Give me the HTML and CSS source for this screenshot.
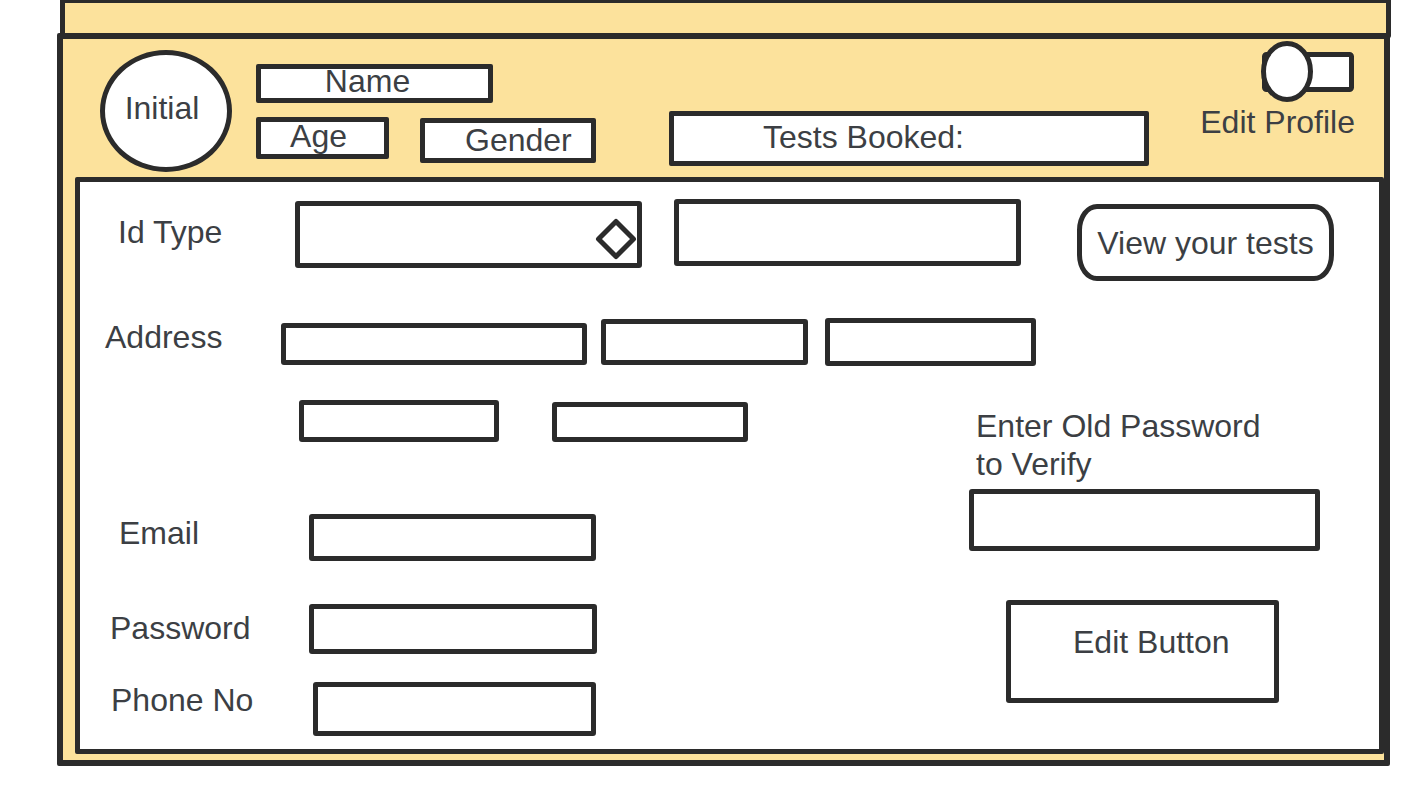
FILE: index.html
```html
<!DOCTYPE html>
<html lang="en">
  <head>
    <meta charset="UTF-8" />
    <meta name="viewport" content="width=device-width, initial-scale=1.0" />
    <title>Profile</title>
    <link rel="stylesheet" href="styles.css">
  </head>
  <body>
    <div class="topbar"></div>
    <div class="frame">
      <div class="header">
        <div class="avatar">Initial</div>
        <div class="ident">
          <div class="tag tag-name">Name</div>
          <div class="ident-row">
            <div class="tag tag-age">Age</div>
            <div class="tag tag-gender">Gender</div>
          </div>
        </div>
        <div class="tag tag-tests">Tests Booked:</div>
        <div class="profile">
          <svg class="toggle" width="98" height="66" viewBox="0 0 98 66">
            <rect x="5.5" y="15.5" width="87" height="35" rx="2" fill="#fff" stroke="#2b2b2b" stroke-width="5" />
            <ellipse cx="28" cy="32.5" rx="23.5" ry="28" fill="#fff" stroke="#2b2b2b" stroke-width="5" />
          </svg>
          <span class="profile-label">Edit Profile</span>
        </div>
      </div>

      <div class="sheet">
        <div class="row row-id">
          <span class="lbl lbl-id">Id Type</span>
          <div class="field select">
            <svg class="caret" width="42" height="42" viewBox="0 0 42 42">
              <polygon points="21,3.5 38.5,21 21,38.5 3.5,21" fill="#fff" stroke="#2b2b2b" stroke-width="5" stroke-linejoin="round" />
            </svg>
          </div>
          <div class="field id-number"></div>
          <div class="btn-tests">View your tests</div>
        </div>

        <div class="row row-address">
          <span class="lbl lbl-address">Address</span>
          <div class="field addr-1"></div>
          <div class="field addr-2"></div>
          <div class="field addr-3"></div>
        </div>

        <div class="lower">
          <div class="lower-left">
            <div class="row row-address2">
              <div class="field addr-4"></div>
              <div class="field addr-5"></div>
            </div>
            <div class="row row-email">
              <span class="lbl lbl-email">Email</span>
              <div class="field email"></div>
            </div>
            <div class="row row-password">
              <span class="lbl lbl-password">Password</span>
              <div class="field password"></div>
            </div>
            <div class="row row-phone">
              <span class="lbl lbl-phone">Phone No</span>
              <div class="field phone"></div>
            </div>
          </div>
          <div class="lower-right">
            <p class="verify-label">Enter Old Password<br />to Verify</p>
            <div class="field old-password"></div>
            <div class="btn-edit">Edit Button</div>
          </div>
        </div>
      </div>
    </div>
  </body>
</html>
```

FILE: styles.css
```css
body {
  margin: 0;
  background-color: #fff;
  font-family: "Liberation Sans", Arial, sans-serif;
  color: #3c3f44;
  font-size: 32px;
  line-height: 36px;
}
.topbar {
  box-sizing: border-box;
  margin: -2px 0 0 60px;
  width: 1331px;
  height: 40px;
  border: 5px solid #2b2b2b;
  border-radius: 2px;
  background-color: #fce29c;
}
.frame {
  box-sizing: border-box;
  margin: -5px 0 0 57px;
  width: 1333px;
  height: 733px;
  border: 6px solid #2b2b2b;
  border-radius: 2px;
  padding-bottom: 6px;
  background-color: #fce29c;
}
.header {
  display: flex;
  align-items: flex-start;
  height: 138px;
}
.avatar {
  box-sizing: border-box;
  display: flex;
  align-items: center;
  justify-content: center;
  flex-shrink: 0;
  margin: 11px 0 0 37px;
  width: 132px;
  height: 122px;
  padding: 0 8px 6px 0;
  border: 5px solid #2b2b2b;
  border-radius: 50%;
  background-color: #fff;
}
.ident {
  margin-left: 24px;
}
.ident-row {
  display: flex;
  align-items: flex-start;
}
.tag {
  box-sizing: border-box;
  flex-shrink: 0;
  border: 5px solid #2b2b2b;
  border-radius: 2px;
  background-color: #fff;
  white-space: nowrap;
}
.tag-name {
  margin-top: 25px;
  width: 237px;
  height: 39px;
  line-height: 24px;
  text-align: center;
  padding-right: 14px;
}
.tag-age {
  margin-top: 14px;
  width: 133px;
  height: 42px;
  line-height: 29px;
  text-align: center;
  padding-right: 8px;
}
.tag-gender {
  margin: 15px 0 0 31px;
  width: 176px;
  height: 45px;
  line-height: 35px;
  padding-left: 40px;
}
.tag-tests {
  margin: 72px 0 0 73px;
  width: 480px;
  height: 55px;
  line-height: 43px;
  padding-left: 89px;
}
.profile {
  display: flex;
  flex-direction: column;
  align-items: flex-end;
  margin: 0 29px 0 auto;
}
.toggle {
  display: block;
  margin-right: -2px;
}
.profile-label {
  margin-top: -1px;
  white-space: nowrap;
}
.sheet {
  box-sizing: border-box;
  margin-left: 12px;
  width: 1309px;
  height: 577px;
  border: 5px solid #2b2b2b;
  border-radius: 2px;
  background-color: #fff;
}
.row {
  display: flex;
  align-items: flex-start;
}
.lbl {
  flex-shrink: 0;
  white-space: nowrap;
}
.field {
  box-sizing: border-box;
  flex-shrink: 0;
  border: 5px solid #2b2b2b;
  border-radius: 3px;
  background-color: #fff;
}
.lbl-id {
  margin: 32px 0 0 38px;
  width: 177px;
}
.select {
  display: flex;
  justify-content: flex-end;
  align-items: center;
  margin-top: 19px;
  width: 347px;
  height: 67px;
}
.caret {
  display: block;
  margin-top: 9px;
}
.id-number {
  margin: 17px 0 0 32px;
  width: 347px;
  height: 67px;
}
.btn-tests {
  box-sizing: border-box;
  display: flex;
  align-items: center;
  justify-content: center;
  flex-shrink: 0;
  margin: 22px 0 0 56px;
  width: 257px;
  height: 77px;
  border: 5px solid #2b2b2b;
  border-radius: 20px / 26px;
  white-space: nowrap;
}
.lbl-address {
  margin: 38px 0 0 25px;
  width: 176px;
}
.addr-1 {
  margin-top: 42px;
  width: 306px;
  height: 42px;
}
.addr-2 {
  margin: 38px 0 0 14px;
  width: 207px;
  height: 46px;
}
.addr-3 {
  margin: 37px 0 0 17px;
  width: 211px;
  height: 48px;
}
.lower {
  display: flex;
  align-items: flex-start;
}
.lower-left {
  flex-shrink: 0;
  width: 889px;
}
.addr-4 {
  margin: 34px 0 0 219px;
  width: 200px;
  height: 42px;
}
.addr-5 {
  margin: 36px 0 0 53px;
  width: 196px;
  height: 40px;
}
.lbl-email {
  margin: 73px 0 0 39px;
  width: 190px;
}
.email {
  margin-top: 72px;
  width: 287px;
  height: 47px;
}
.lbl-password {
  margin: 49px 0 0 30px;
  width: 199px;
}
.password {
  margin-top: 43px;
  width: 288px;
  height: 50px;
}
.lbl-phone {
  margin: 28px 0 0 31px;
  width: 202px;
}
.phone {
  margin-top: 28px;
  width: 283px;
  height: 54px;
}
.verify-label {
  margin: 41px 0 0 7px;
  font-size: 32px;
  line-height: 38px;
  white-space: nowrap;
}
.old-password {
  margin-top: 6px;
  width: 351px;
  height: 62px;
}
.btn-edit {
  box-sizing: border-box;
  margin: 49px 0 0 37px;
  width: 273px;
  height: 103px;
  padding: 19px 0 0 62px;
  border: 5px solid #2b2b2b;
  border-radius: 3px;
  white-space: nowrap;
}
```
